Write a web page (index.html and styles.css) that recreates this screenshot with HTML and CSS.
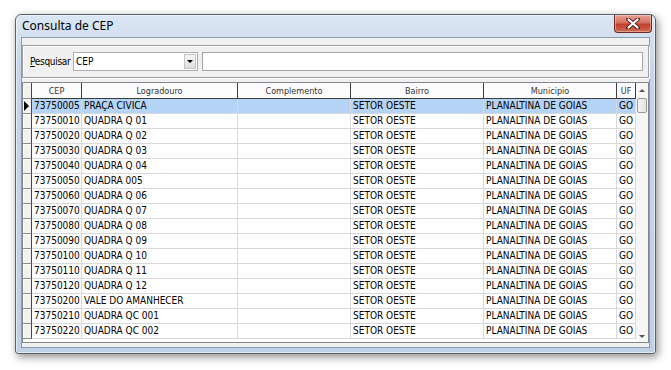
FILE: index.html
```html
<!DOCTYPE html>
<html lang="pt">
<head>
    <meta charset="UTF-8">
    <title>Consulta de CEP</title>
    <link rel="stylesheet" href="styles.css">
</head>
<body>
    <div class="window">
        <div class="titlebar">
            <span class="title">Consulta de CEP</span>
            <div class="close-btn">
                <svg width="14" height="11" viewBox="0 0 14 11">
                    <path d="M2 1 L12 10 M12 1 L2 10" stroke="#5a2020" stroke-width="4" stroke-linecap="round"/>
                    <path d="M2.5 1.5 L11.5 9.5 M11.5 1.5 L2.5 9.5" stroke="#ffffff" stroke-width="2.2" stroke-linecap="round"/>
                </svg>
            </div>
        </div>

        <div class="client">
            <div class="search-panel">
                <label class="search-label"><u>P</u>esquisar</label>
                <div class="combo">
                    <span class="combo-value">CEP</span>
                    <span class="combo-drop"><span class="arrow-down"></span></span>
                </div>
                <div class="text-input"></div>
            </div>

            <div class="grid">
                <table class="grid-table">
                    <colgroup>
                        <col class="c-ind"><col class="c-cep"><col class="c-log"><col class="c-comp">
                        <col class="c-bairro"><col class="c-mun"><col class="c-uf">
                    </colgroup>
                    <thead>
                        <tr>
                            <th class="ind"></th>
                            <th>CEP</th>
                            <th>Logradouro</th>
                            <th>Complemento</th>
                            <th>Bairro</th>
                            <th>Municipio</th>
                            <th>UF</th>
                        </tr>
                    </thead>
                    <tbody id="rows"></tbody>
                </table>
                <div class="vscroll">
                    <span class="arrow-up"></span>
                    <span class="thumb"></span>
                    <span class="track"></span>
                    <span class="arrow-down small"></span>
                </div>
            </div>
        </div>
    </div>

    <script>
        // registros da consulta
        var ceps = [
            ['73750005', 'PRAÇA CIVICA'],
            ['73750010', 'QUADRA Q 01'],
            ['73750020', 'QUADRA Q 02'],
            ['73750030', 'QUADRA Q 03'],
            ['73750040', 'QUADRA Q 04'],
            ['73750050', 'QUADRA 005'],
            ['73750060', 'QUADRA Q 06'],
            ['73750070', 'QUADRA Q 07'],
            ['73750080', 'QUADRA Q 08'],
            ['73750090', 'QUADRA Q 09'],
            ['73750100', 'QUADRA Q 10'],
            ['73750110', 'QUADRA Q 11'],
            ['73750120', 'QUADRA Q 12'],
            ['73750200', 'VALE DO AMANHECER'],
            ['73750210', 'QUADRA QC 001'],
            ['73750220', 'QUADRA QC 002']
        ];

        var tbody = document.getElementById('rows');
        ceps.forEach(function(c, i) {
            var tr = document.createElement('tr');
            if (i === 0) tr.className = 'selected';
            tr.innerHTML =
                '<td class="ind">' + (i === 0 ? '<span class="marker"></span>' : '') + '</td>' +
                '<td>' + c[0] + '</td>' +
                '<td>' + c[1] + '</td>' +
                '<td></td>' +
                '<td>SETOR OESTE</td>' +
                '<td>PLANALTINA DE GOIAS</td>' +
                '<td>GO</td>';
            tbody.appendChild(tr);
        });
    </script>
</body>
</html>
```

FILE: styles.css
```css
body {
    margin: 0;
    width: 671px;
    height: 370px;
    overflow: hidden;
    background: #ffffff;
    font-family: "DejaVu Sans Condensed", "DejaVu Sans", sans-serif;
    font-size: 10px;
    color: #000;
}

/* janela estilo Windows 7 */
.window {
    margin: 14px 0 0 15px;
    width: 641px;
    height: 340px;
    box-sizing: border-box;
    border: 1px solid #56616d;
    border-radius: 6px 6px 3px 3px;
    background: linear-gradient(#dbe6f3, #c4d5ea 60px, #bfd1e7);
    box-shadow: 2px 3px 9px rgba(0, 0, 0, 0.45), inset 0 0 0 1px rgba(255, 255, 255, 0.55);
    padding: 0 5px 5px 5px;
    display: flex;
    flex-direction: column;
}
.titlebar {
    height: 22px;
    display: flex;
    justify-content: space-between;
    align-items: flex-start;
}
.title {
    font-family: "Noto Sans", sans-serif;
    font-size: 12px;
    line-height: 16px;
    padding: 3px 0 0 1px;
    color: #000;
}
.close-btn {
    width: 38px;
    height: 18px;
    margin-right: -2px;
    box-sizing: border-box;
    border: 1px solid #6e2a22;
    border-top: none;
    border-radius: 0 0 4px 4px;
    background: linear-gradient(#e8a493, #d4705f 45%, #c2402e 55%, #cf6a50);
    box-shadow: inset 0 0 0 1px rgba(255, 220, 210, 0.45);
    display: flex;
    align-items: center;
    justify-content: center;
}

.client {
    flex: 1;
    border: 1px solid #8b9cb0;
    background: #f0f0f0;
    display: flex;
    flex-direction: column;
}

/* painel de pesquisa */
.search-panel {
    margin-top: 7px;
    height: 33px;
    box-sizing: border-box;
    border: 1px solid #a0a0a0;
    box-shadow: inset 1px 1px 0 #fff, 1px 1px 0 #fff;
    padding: 6px 5px 0 7px;
    display: flex;
    align-items: flex-start;
}
.search-label {
    flex: 0 0 43px;
    line-height: 19px;
    letter-spacing: -0.3px;
    white-space: nowrap;
}
.combo {
    flex: 0 0 125px;
    height: 19px;
    box-sizing: border-box;
    border: 1px solid #abadb3;
    background: #fff;
    display: flex;
    align-items: center;
    justify-content: space-between;
}
.combo-value {
    padding-left: 2px;
}
.combo-drop {
    width: 12px;
    height: 15px;
    margin-right: 1px;
    background: linear-gradient(#f6f6f6, #dedede);
    border: 1px solid #c4c4c4;
    box-sizing: border-box;
    display: flex;
    align-items: center;
    justify-content: center;
}
.arrow-down {
    width: 0;
    height: 0;
    border-left: 3px solid transparent;
    border-right: 3px solid transparent;
    border-top: 3px solid #000;
}
.text-input {
    margin-left: 4px;
    flex: 1;
    height: 19px;
    box-sizing: border-box;
    border: 1px solid #a5a5a5;
    background: #fff;
}

/* grade */
.grid {
    margin-top: 4px;
    height: 261px;
    box-sizing: border-box;
    border: 1px solid #828790;
    background: #fff;
    display: flex;
}
.grid-table {
    width: 613px;
    table-layout: fixed;
    border-collapse: separate;
    border-spacing: 0;
    align-self: flex-start;
}
.c-ind { width: 9px; }
.c-cep { width: 50px; }
.c-log { width: 156px; }
.c-comp { width: 113px; }
.c-bairro { width: 133px; }
.c-mun { width: 133px; }
.c-uf { width: 19px; }

.grid-table th {
    height: 16px;
    box-sizing: border-box;
    padding: 0;
    font-weight: normal;
    font-size: 9px;
    color: #333;
    background: #fcfcfc;
    border-right: 1px solid #3c3c3c;
    border-bottom: 1px solid #3c3c3c;
    text-align: center;
    overflow: hidden;
    white-space: nowrap;
}
.grid-table td {
    height: 15px;
    box-sizing: border-box;
    padding: 0 0 0 2px;
    border-right: 1px solid #d9d9d9;
    border-bottom: 1px solid #d9d9d9;
    white-space: nowrap;
    overflow: hidden;
    line-height: 14px;
}
.grid-table td.ind,
.grid-table th.ind {
    padding: 0;
    background: #f2f2f2;
    border-right: 1px solid #444;
    border-bottom: 1px solid #8c8c8c;
    box-shadow: inset 1px 1px 0 #fff;
    position: relative;
}
.selected td {
    background: #b4d3f5;
}
.selected td.ind {
    background: #f2f2f2;
}
.marker {
    position: absolute;
    left: 1px;
    top: 2px;
    width: 0;
    height: 0;
    border-top: 5px solid transparent;
    border-bottom: 5px solid transparent;
    border-left: 5px solid #000;
}

.vscroll {
    flex: 1;
    background: #f7f7f7;
    display: flex;
    flex-direction: column;
    align-items: center;
}
.arrow-up {
    margin: 6px 0 6px;
    width: 0;
    height: 0;
    border-left: 3px solid transparent;
    border-right: 3px solid transparent;
    border-bottom: 3px solid #555;
}
.thumb {
    width: 10px;
    height: 15px;
    box-sizing: border-box;
    border: 1px solid #9a9a9a;
    border-radius: 2px;
    background: linear-gradient(90deg, #f4f4f4, #e2e2e2);
}
.track {
    flex: 1;
}
.arrow-down.small {
    margin-bottom: 4px;
    border-top-color: #555;
}
```
